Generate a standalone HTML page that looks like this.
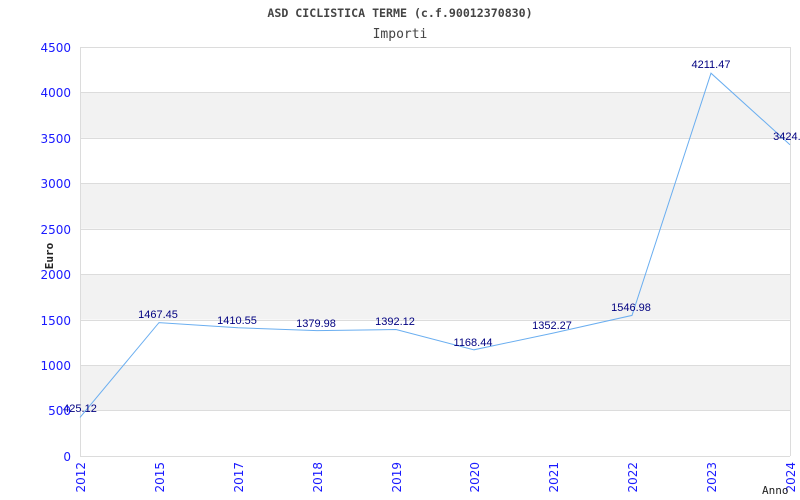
<!DOCTYPE html>
<html><head><meta charset="utf-8"><style>html,body{margin:0;padding:0;background:#fff;width:800px;height:500px;overflow:hidden}</style></head><body>
<svg width="800" height="500" xmlns="http://www.w3.org/2000/svg">
<rect width="800" height="500" fill="#fff"/>
<g fill="#f2f2f2">
<rect x="80" y="365.1" width="710" height="45.4"/>
<rect x="80" y="274.2" width="710" height="45.4"/>
<rect x="80" y="183.3" width="710" height="45.4"/>
<rect x="80" y="92.4" width="710" height="45.4"/>
</g>
<g stroke="#dcdcdc" stroke-width="1">
<line x1="80" y1="47.5" x2="790" y2="47.5"/>
<line x1="80" y1="92.5" x2="790" y2="92.5"/>
<line x1="80" y1="138.5" x2="790" y2="138.5"/>
<line x1="80" y1="183.5" x2="790" y2="183.5"/>
<line x1="80" y1="229.5" x2="790" y2="229.5"/>
<line x1="80" y1="274.5" x2="790" y2="274.5"/>
<line x1="80" y1="320.5" x2="790" y2="320.5"/>
<line x1="80" y1="365.5" x2="790" y2="365.5"/>
<line x1="80" y1="410.5" x2="790" y2="410.5"/>
<line x1="80" y1="456.5" x2="790" y2="456.5"/>
<line x1="80.5" y1="47" x2="80.5" y2="456"/>
<line x1="790.5" y1="47" x2="790.5" y2="456"/>
</g>
<polyline fill="none" stroke="#6aaef0" stroke-width="1" points="80,417.4 159,322.6 238,327.8 317,330.6 396,329.5 474,349.8 553,333.1 632,315.4 711,73.2 790,144.7"/>
<g font-family="Liberation Sans, sans-serif" font-size="11" fill="#000080" text-anchor="middle">
<text x="80" y="412">425.12</text>
<text x="158" y="318">1467.45</text>
<text x="237" y="324">1410.55</text>
<text x="316" y="327">1379.98</text>
<text x="395" y="325">1392.12</text>
<text x="473" y="346">1168.44</text>
<text x="552" y="329">1352.27</text>
<text x="631" y="311">1546.98</text>
<text x="711" y="68">4211.47</text>
<text x="790" y="140">3424.7</text>
</g>
<g font-family="DejaVu Sans, sans-serif" font-size="12" fill="#1a1aff" text-anchor="end">
<text x="71" y="52">4500</text>
<text x="71" y="97">4000</text>
<text x="71" y="143">3500</text>
<text x="71" y="188">3000</text>
<text x="71" y="234">2500</text>
<text x="71" y="279">2000</text>
<text x="71" y="325">1500</text>
<text x="71" y="370">1000</text>
<text x="71" y="415">500</text>
<text x="71" y="461">0</text>
</g>
<g font-family="DejaVu Sans, sans-serif" font-size="12" fill="#1a1aff" text-anchor="end">
<text transform="translate(85,462) rotate(-90)">2012</text>
<text transform="translate(164,462) rotate(-90)">2015</text>
<text transform="translate(243,462) rotate(-90)">2017</text>
<text transform="translate(322,462) rotate(-90)">2018</text>
<text transform="translate(401,462) rotate(-90)">2019</text>
<text transform="translate(479,462) rotate(-90)">2020</text>
<text transform="translate(558,462) rotate(-90)">2021</text>
<text transform="translate(637,462) rotate(-90)">2022</text>
<text transform="translate(716,462) rotate(-90)">2023</text>
<text transform="translate(795,462) rotate(-90)">2024</text>
</g>
<text x="400" y="17" text-anchor="middle" font-family="DejaVu Sans Mono, monospace" font-weight="bold" font-size="11.6" fill="#444">ASD CICLISTICA TERME (c.f.90012370830)</text>
<text x="400" y="38" text-anchor="middle" font-family="DejaVu Sans Mono, monospace" font-size="13" fill="#444">Importi</text>
<text transform="translate(53,256) rotate(-90)" text-anchor="middle" font-family="DejaVu Sans Mono, monospace" font-weight="bold" font-size="11" fill="#222">Euro</text>
<text x="762" y="494" font-family="DejaVu Sans Mono, monospace" font-size="11" fill="#222">Anno</text>
</svg>
</body></html>
